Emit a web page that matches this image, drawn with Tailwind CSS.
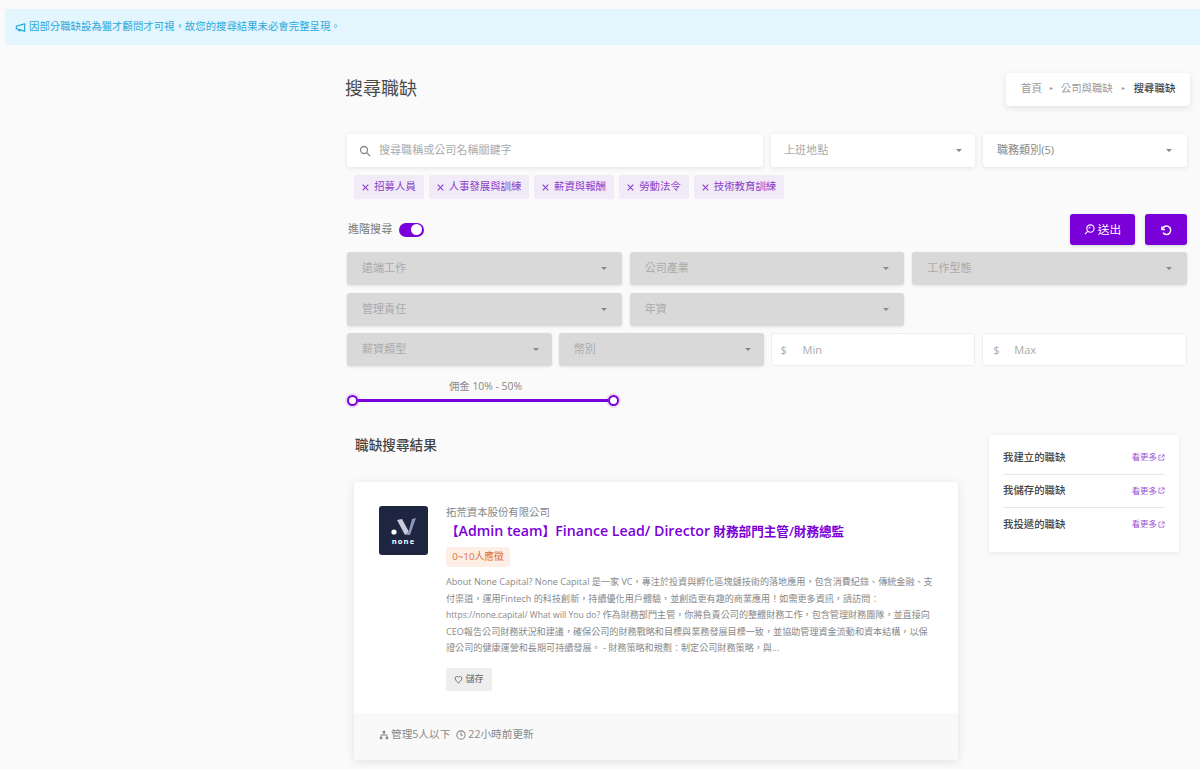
<!DOCTYPE html>
<html lang="zh-Hant">
<head>
  <meta charset="UTF-8" />
  <title>搜尋職缺</title>
  <script src="https://cdn.jsdelivr.net/npm/@tailwindcss/browser@4"></script>
</head>
<body class="bg-[#fafafa] text-[#4b4b4b] font-['Open_Sans','Noto_Sans_CJK_TC',sans-serif] h-[769px] overflow-hidden">

  <!-- Alert -->
  <div class="pt-[9px] pl-[5px]">
    <div class="h-[36px] bg-[#e3f5fd] text-[#2aa9dc] text-[10.4px] pl-[10px] flex items-center gap-[3px]">
      <svg class="w-[11px] h-[11px]" viewBox="0 0 24 24" fill="none" stroke="currentColor" stroke-width="2.6"><path d="M3 9v6l18 5V4L3 9z"/><path d="M8 15v4h4v-3"/></svg>
      <span>因部分職缺設為獵才顧問才可視，故您的搜尋結果未必會完整呈現。</span>
    </div>
  </div>

  <main class="pl-[345px] pr-[10px]">
    <!-- Title + breadcrumb -->
    <div class="flex justify-between items-center mt-[28px] h-[33px]">
      <h1 class="text-[18px] text-[#4a4a4a] -mt-[2px]">搜尋職缺</h1>
      <div class="w-[184px] h-[33px] bg-white rounded-[3px] shadow-[0_2px_6px_rgba(0,0,0,0.1)] flex items-center pl-[15px] pb-[2px] text-[10.4px] text-[#999]">
        <span>首頁</span><span class="mx-[8px] text-[6px]">▸</span><span>公司與職缺</span><span class="mx-[9px] text-[6px]">▸</span><span class="font-medium text-[#444]">搜尋職缺</span>
      </div>
    </div>

    <div class="pl-[2px] pr-[3px]">
      <!-- Search row -->
      <div class="grid grid-cols-4 gap-[8px] mt-[28px]">
        <div class="col-span-2 h-[33px] bg-white rounded-[3px] shadow-[0_1px_4px_rgba(0,0,0,0.1)] flex items-center pl-[12px] pb-[1px] text-[11.05px] text-[#aaa]">
          <svg class="w-[12px] h-[12px] mr-[8px] mt-[1px] text-[#888]" viewBox="0 0 24 24" fill="none" stroke="currentColor" stroke-width="2.6"><circle cx="10" cy="10" r="7"/><path d="M15.5 15.5L22 22"/></svg>
          搜尋職稱或公司名稱關鍵字
        </div>
        <div class="h-[33px] bg-white rounded-[3px] shadow-[0_1px_4px_rgba(0,0,0,0.1)] flex items-center justify-between pl-[13px] pr-[13px] text-[11.05px] text-[#aaa]">
          <span class="-mt-[1px]">上班地點</span><span class="w-0 h-0 border-x-[3px] border-x-transparent border-t-[3px] border-t-[#888]"></span>
        </div>
        <div class="h-[33px] bg-white rounded-[3px] shadow-[0_1px_4px_rgba(0,0,0,0.1)] flex items-center justify-between pl-[14px] pr-[15px] text-[11.05px] text-[#888]">
          <span class="-mt-[1px]">職務類別(5)</span><span class="w-0 h-0 border-x-[3px] border-x-transparent border-t-[3px] border-t-[#888]"></span>
        </div>
      </div>

      <!-- Selected tags -->
      <div class="flex gap-[5px] mt-[8px] ml-[7px] text-[10.4px] text-[#8a3fc9]">
        <span class="h-[24px] w-[70px] bg-[#f1ebf8] rounded-[2px] flex items-center justify-center gap-[5px]"><svg class="w-[7px] h-[7px]" viewBox="0 0 10 10" stroke="currentColor" stroke-width="1.6"><path d="M1 1l8 8M9 1l-8 8"/></svg>招募人員</span>
        <span class="h-[24px] w-[100px] bg-[#f1ebf8] rounded-[2px] flex items-center justify-center gap-[5px]"><svg class="w-[7px] h-[7px]" viewBox="0 0 10 10" stroke="currentColor" stroke-width="1.6"><path d="M1 1l8 8M9 1l-8 8"/></svg>人事發展與訓練</span>
        <span class="h-[24px] w-[80px] bg-[#f1ebf8] rounded-[2px] flex items-center justify-center gap-[5px]"><svg class="w-[7px] h-[7px]" viewBox="0 0 10 10" stroke="currentColor" stroke-width="1.6"><path d="M1 1l8 8M9 1l-8 8"/></svg>薪資與報酬</span>
        <span class="h-[24px] w-[70px] bg-[#f1ebf8] rounded-[2px] flex items-center justify-center gap-[5px]"><svg class="w-[7px] h-[7px]" viewBox="0 0 10 10" stroke="currentColor" stroke-width="1.6"><path d="M1 1l8 8M9 1l-8 8"/></svg>勞動法令</span>
        <span class="h-[24px] w-[90px] bg-[#f1ebf8] rounded-[2px] flex items-center justify-center gap-[5px]"><svg class="w-[7px] h-[7px]" viewBox="0 0 10 10" stroke="currentColor" stroke-width="1.6"><path d="M1 1l8 8M9 1l-8 8"/></svg>技術教育訓練</span>
      </div>

      <!-- Advanced toggle + buttons -->
      <div class="flex justify-between items-center mt-[15px] h-[31px]">
        <div class="flex items-center gap-[7px] ml-px text-[11.05px] text-[#777]">
          <span>進階搜尋</span>
          <span class="w-[25px] h-[14px] rounded-full bg-[#7a00d9] flex justify-end items-center pr-[2px]"><span class="w-[11px] h-[11px] rounded-full bg-white"></span></span>
        </div>
        <div class="flex gap-[10px]">
          <button class="w-[65px] h-[31px] bg-[#7a00d9] rounded-[3px] text-white text-[11.7px] flex items-center justify-center gap-[3px] shadow-[0_1px_3px_rgba(0,0,0,0.15)]">
            <svg class="w-[11px] h-[11px]" viewBox="0 0 24 24" fill="none" stroke="currentColor" stroke-width="2.4"><circle cx="14" cy="10" r="8"/><path d="M8 16l-6 6M11 10a3 3 0 0 1 3-3"/></svg>送出
          </button>
          <button class="w-[42px] h-[31px] bg-[#7a00d9] rounded-[3px] text-white flex items-center justify-center shadow-[0_1px_3px_rgba(0,0,0,0.15)]">
            <svg class="w-[12px] h-[12px]" viewBox="0 0 24 24" fill="none" stroke="currentColor" stroke-width="3"><path d="M4 5v6h6"/><path d="M4.5 11A8.5 8.5 0 1 1 6 17.5"/></svg>
          </button>
        </div>
      </div>

      <!-- Disabled filters -->
      <div class="grid grid-cols-3 gap-[8px] mt-[7px] text-[11.05px] text-[#aaa]">
        <div class="h-[33px] bg-[#d9d9d9] rounded-[3px] shadow-[0_1px_3px_rgba(0,0,0,0.1)] flex items-center justify-between pl-[15px] pr-[15px]"><span class="-mt-[1px]">遠端工作</span><span class="w-0 h-0 border-x-[3px] border-x-transparent border-t-[3px] border-t-[#888]"></span></div>
        <div class="h-[33px] bg-[#d9d9d9] rounded-[3px] shadow-[0_1px_3px_rgba(0,0,0,0.1)] flex items-center justify-between pl-[15px] pr-[15px]"><span class="-mt-[1px]">公司產業</span><span class="w-0 h-0 border-x-[3px] border-x-transparent border-t-[3px] border-t-[#888]"></span></div>
        <div class="h-[33px] bg-[#d9d9d9] rounded-[3px] shadow-[0_1px_3px_rgba(0,0,0,0.1)] flex items-center justify-between pl-[15px] pr-[15px]"><span class="-mt-[1px]">工作型態</span><span class="w-0 h-0 border-x-[3px] border-x-transparent border-t-[3px] border-t-[#888]"></span></div>
        <div class="h-[33px] bg-[#d9d9d9] rounded-[3px] shadow-[0_1px_3px_rgba(0,0,0,0.1)] flex items-center justify-between pl-[15px] pr-[15px]"><span class="-mt-[1px]">管理責任</span><span class="w-0 h-0 border-x-[3px] border-x-transparent border-t-[3px] border-t-[#888]"></span></div>
        <div class="h-[33px] bg-[#d9d9d9] rounded-[3px] shadow-[0_1px_3px_rgba(0,0,0,0.1)] flex items-center justify-between pl-[15px] pr-[15px]"><span class="-mt-[1px]">年資</span><span class="w-0 h-0 border-x-[3px] border-x-transparent border-t-[3px] border-t-[#888]"></span></div>
      </div>
      <div class="grid grid-cols-4 gap-[7px] mt-[7px] text-[11.05px] text-[#aaa]">
        <div class="h-[33px] bg-[#d9d9d9] rounded-[3px] shadow-[0_1px_3px_rgba(0,0,0,0.1)] flex items-center justify-between pl-[15px] pr-[13px]"><span class="-mt-[1px]">薪資類型</span><span class="w-0 h-0 border-x-[3px] border-x-transparent border-t-[3px] border-t-[#888]"></span></div>
        <div class="h-[33px] bg-[#d9d9d9] rounded-[3px] shadow-[0_1px_3px_rgba(0,0,0,0.1)] flex items-center justify-between pl-[15px] pr-[13px]"><span class="-mt-[1px]">幣別</span><span class="w-0 h-0 border-x-[3px] border-x-transparent border-t-[3px] border-t-[#888]"></span></div>
        <div class="h-[33px] bg-white rounded-[3px] border border-[#eee] flex items-center pl-[9px] pt-[1px]"><span class="w-[22px]">$</span><span>Min</span></div>
        <div class="h-[33px] bg-white rounded-[3px] border border-[#eee] flex items-center pl-[10px] pt-[1px]"><span class="w-[21px]">$</span><span>Max</span></div>
      </div>

      <!-- Commission slider -->
      <div class="w-[277px] mt-[13px] text-center text-[10.4px] text-[#888] leading-[14px]">佣金 10% - 50%</div>
      <div class="w-[272px] h-[14px] flex items-center">
        <span class="w-[11px] h-[11px] shrink-0 rounded-full bg-white border-[2px] border-[#7a00d9] shadow-[0_0_0_2px_rgba(122,0,217,0.12)]"></span>
        <span class="flex-1 h-[3px] bg-[#7a00d9]"></span>
        <span class="w-[11px] h-[11px] shrink-0 rounded-full bg-white border-[2px] border-[#7a00d9] shadow-[0_0_0_2px_rgba(122,0,217,0.12)]"></span>
      </div>
    </div>

    <!-- Results -->
    <div class="flex mt-[29px] pl-[9px]">
      <div class="w-[604px]">
        <h2 class="text-[13.65px] font-medium text-[#444] pl-px leading-[20px] -mt-[1px]">職缺搜尋結果</h2>
        <article class="mt-[27px] h-[278px] bg-white rounded-[2px] shadow-[0_2px_10px_rgba(0,0,0,0.1)] flex flex-col">
          <div class="flex-1 flex pl-[25px] pt-[24px] pr-[24px]">
            <div class="w-[49px] h-[49px] shrink-0 rounded-[3px] bg-[#1e2540] flex flex-col items-center pt-[9px]">
              <svg class="w-[26px] h-[21px]" viewBox="0 0 26 21"><path d="M6 5l5-1 7 13-4 3z" fill="#c9ccdb"/><path d="M25 3l-6 17h-4l3-5 3-11z" fill="#8d94b4"/><circle cx="3" cy="17" r="2.6" fill="#fff"/></svg>
              <span class="text-white text-[7.5px] font-bold tracking-[1.2px] leading-[10px]">none</span>
            </div>
            <div class="ml-[18px] flex-1">
              <div class="text-[10.4px] text-[#888] leading-[14px] -mt-[1px]">拓荒資本股份有限公司</div>
              <h3 class="text-[12.6px] font-semibold text-[#7a00d9] leading-[20px] mt-[2px]">【<span class="text-[14.2px]">Admin team</span>】<span class="text-[14.2px]">Finance Lead/ Director</span> 財務部門主管/財務總監</h3>
              <span class="inline-block mt-[5px] w-[64px] h-[20px] leading-[20px] text-center bg-[#fdeee6] text-[#e0703f] text-[9.75px] rounded-[3px]">0~10人應徵</span>
              <p class="mt-[7px] text-[9.1px] leading-[16.5px] text-[#888]">About None Capital? None Capital 是一家 VC，專注於投資與孵化區塊鏈技術的落地應用，包含消費紀錄、傳統金融、支付渠道，運用Fintech 的科技創新，持續優化用戶體驗，並創造更有趣的商業應用！如需更多資訊，請訪問： <span class="inline-block text-[8.6px]">https://none.capital/ What will You do?</span> 作為財務部門主管，你將負責公司的整體財務工作，包含管理財務團隊，並直接向CEO報告公司財務狀況和建議，確保公司的財務戰略和目標與業務發展目標一致，並協助管理資金流動和資本結構，以保證公司的健康運營和長期可持續發展。 - 財務策略和規劃：制定公司財務策略，與...</p>
              <button class="mt-[11px] w-[46px] h-[23px] bg-[#eeeeee] rounded-[2px] text-[9.1px] text-[#666] flex items-center justify-center gap-[2px]">
                <svg class="w-[9px] h-[9px]" viewBox="0 0 24 24" fill="none" stroke="currentColor" stroke-width="2.4"><path d="M12 21S3 15 3 8.5A5 5 0 0 1 12 6a5 5 0 0 1 9 2.5C21 15 12 21 12 21z"/></svg>儲存
              </button>
            </div>
          </div>
          <div class="h-[47px] bg-[#f9f9f9] flex items-center pl-[25px] pb-[4px] text-[10.65px] text-[#888]">
            <svg class="w-[10px] h-[10px] mr-[2px]" viewBox="0 0 24 24" fill="currentColor"><path d="M9 2h6v6h-2v3h7v5h2v6h-6v-6h2v-3h-12v3h2v6H2v-6h2v-5h7V8H9z"/></svg>
            <span>管理5人以下</span>
            <svg class="w-[10px] h-[10px] ml-[6px] mr-[2px]" viewBox="0 0 24 24" fill="none" stroke="currentColor" stroke-width="2.6"><circle cx="12" cy="12" r="10"/><path d="M12 6v6l4 2"/></svg>
            <span>22小時前更新</span>
          </div>
        </article>
      </div>

      <!-- Side card -->
      <aside class="ml-[31px] -mt-[1px] w-[190px] h-[117px] bg-white rounded-[3px] shadow-[0_1px_5px_rgba(0,0,0,0.08)] px-[14px] py-[6px] self-start">
        <div class="h-[34px] flex items-center justify-between border-b border-[#e8e8e8]"><span class="text-[10.4px] font-medium text-[#444]">我建立的職缺</span><span class="flex items-center gap-px text-[8.45px] text-[#9a4fd0]">看更多<svg class="w-[7px] h-[7px]" viewBox="0 0 24 24" fill="none" stroke="currentColor" stroke-width="2.5"><path d="M10 4H3v17h17v-7M13 3h8v8M21 3L11 13"/></svg></span></div>
        <div class="h-[33px] flex items-center justify-between border-b border-[#e8e8e8]"><span class="text-[10.4px] font-medium text-[#444]">我儲存的職缺</span><span class="flex items-center gap-px text-[8.45px] text-[#9a4fd0]">看更多<svg class="w-[7px] h-[7px]" viewBox="0 0 24 24" fill="none" stroke="currentColor" stroke-width="2.5"><path d="M10 4H3v17h17v-7M13 3h8v8M21 3L11 13"/></svg></span></div>
        <div class="h-[33px] flex items-center justify-between"><span class="text-[10.4px] font-medium text-[#444]">我投遞的職缺</span><span class="flex items-center gap-px text-[8.45px] text-[#9a4fd0]">看更多<svg class="w-[7px] h-[7px]" viewBox="0 0 24 24" fill="none" stroke="currentColor" stroke-width="2.5"><path d="M10 4H3v17h17v-7M13 3h8v8M21 3L11 13"/></svg></span></div>
      </aside>
    </div>
  </main>
</body>
</html>
